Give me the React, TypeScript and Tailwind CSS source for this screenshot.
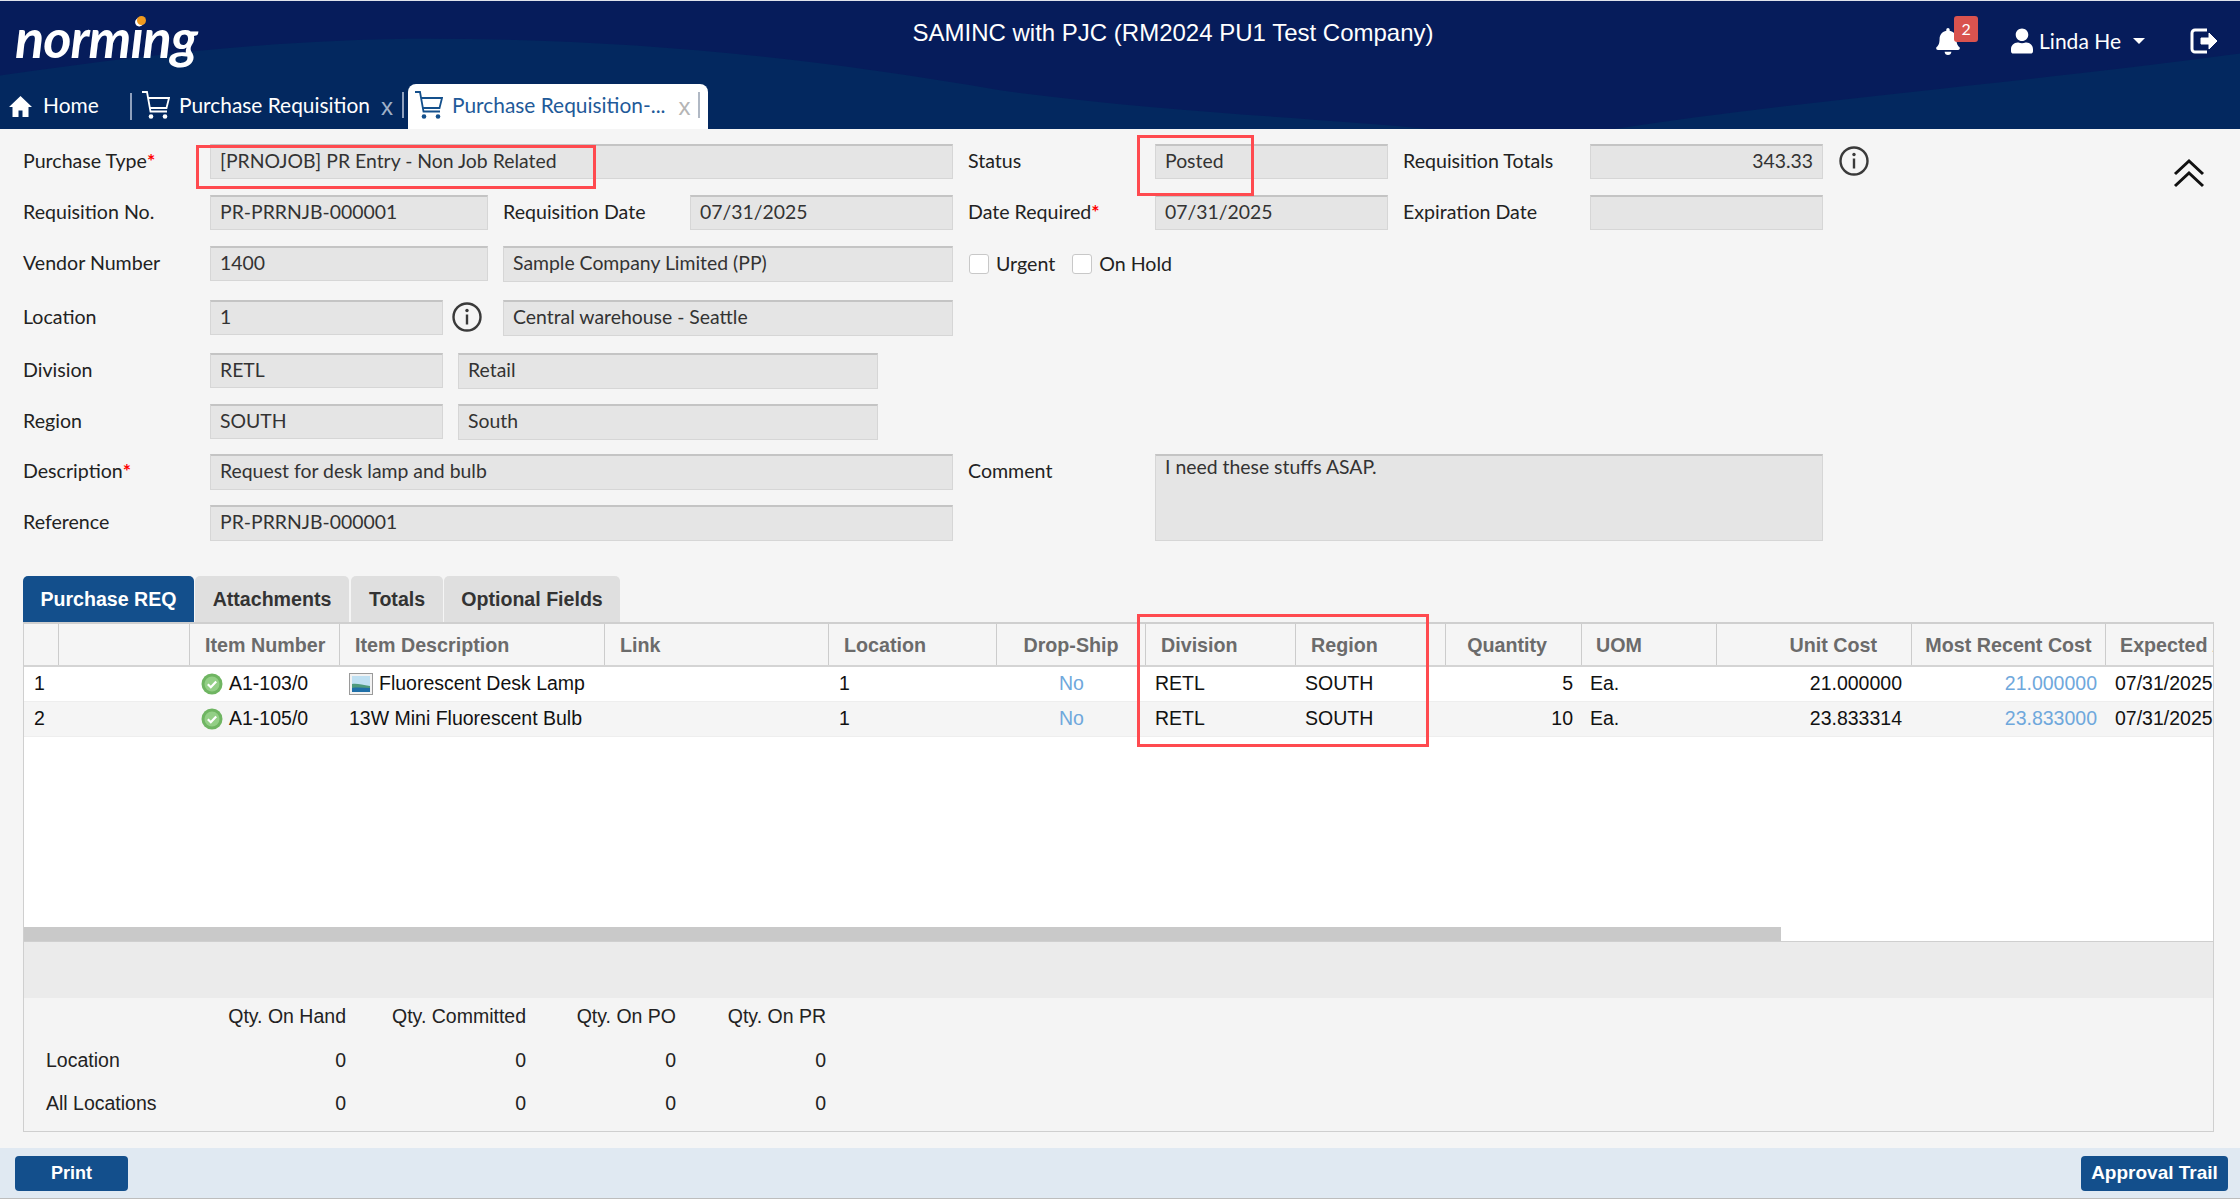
import { FaBell, FaUser } from "react-icons/fa";

const lato = "[font-family:Lato,sans-serif]";
const arial = "[font-family:Liberation_Sans,Arial,sans-serif]";

function CartIcon({ className }: { className: string }) {
  return (
    <svg viewBox="0 0 28 28" className={className} fill="none" stroke="currentColor" strokeWidth="1.8">
      <path d="M0 1h5l3.5 19.5H25" />
      <path d="M6 7h21l-2.5 10H8" />
      <circle cx="9" cy="25.5" r="2.3" fill="currentColor" stroke="none" />
      <circle cx="23" cy="25.5" r="2.3" fill="currentColor" stroke="none" />
    </svg>
  );
}

function InfoIcon({ className }: { className: string }) {
  return (
    <svg viewBox="0 0 30 30" className={className} fill="none">
      <circle cx="15" cy="15" r="13.5" stroke="#3a3a3a" strokeWidth="2.4" />
      <circle cx="15" cy="8.5" r="1.7" fill="#3a3a3a" />
      <path d="M15 12.5v10" stroke="#3a3a3a" strokeWidth="2.4" />
    </svg>
  );
}

function CheckIcon() {
  return (
    <svg viewBox="0 0 22 22" className="h-[22px] w-[22px] shrink-0">
      <circle cx="11" cy="11" r="10.5" fill="#6fb562" />
      <circle cx="11" cy="11" r="7.5" fill="#93cf86" />
      <path d="M6.8 11.2l3 3 5.4-5.8" fill="none" stroke="#fff" strokeWidth="2.2" />
    </svg>
  );
}

function PictureIcon() {
  return (
    <svg viewBox="0 0 24 24" className="h-6 w-6 shrink-0">
      <rect x="0.5" y="1.5" width="23" height="21" fill="#f2f2f2" stroke="#9a9a9a" />
      <rect x="3" y="4" width="18" height="16" fill="#bfe0f2" />
      <path d="M3 12c5-1 10 1 18 2v6H3z" fill="#4f9a7c" />
      <path d="M3 16c6-1 12 0 18 0v4H3z" fill="#1f6fa8" />
    </svg>
  );
}

function Field({
  w,
  children,
  right,
  h = "h-[35px]",
  leading = "leading-[29px]",
}: {
  w: string;
  children?: string;
  right?: boolean;
  h?: string;
  leading?: string;
}) {
  return (
    <div
      className={`${w} ${h} ${leading} shrink-0 border border-[#d6d6d6] border-t-2 border-t-[#c4c4c4] bg-[#e5e5e5] px-[9px] text-[19.4px] text-[#333] ${right ? "text-right" : ""}`}>
      {children}
    </div>
  );
}

function Label({ w, text, required }: { w: string; text: string; required?: boolean }) {
  return (
    <div className={`${w} shrink-0 text-[19.6px] leading-[33px] text-[#222]`}>
      {text}
      {required && <span className="font-bold text-[#f00]">*</span>}
    </div>
  );
}

function Check({ label }: { label: string }) {
  return (
    <div className="flex h-5 items-center gap-[7px]">
      <span className="h-5 w-5 rounded-[3px] border border-[#c8c8c8] bg-white" />
      <span className="text-[19.6px] leading-[18px] text-[#222]">{label}</span>
    </div>
  );
}

const gridCols =
  "grid grid-cols-[35px_131px_150px_265px_224px_168px_149px_150px_150px_136px_135px_195px_194px_200px]";

const headers = [
  { text: "", cls: "" },
  { text: "", cls: "" },
  { text: "Item Number", cls: "pl-[15px]" },
  { text: "Item Description", cls: "pl-[15px]" },
  { text: "Link", cls: "pl-[15px]" },
  { text: "Location", cls: "pl-[15px]" },
  { text: "Drop-Ship", cls: "text-center" },
  { text: "Division", cls: "pl-[15px]" },
  { text: "Region", cls: "pl-[15px]" },
  { text: "Quantity", cls: "text-right pr-[34px]" },
  { text: "UOM", cls: "pl-[14px]" },
  { text: "Unit Cost", cls: "text-right pr-[34px]" },
  { text: "Most Recent Cost", cls: "text-center" },
  { text: "Expected Arrival", cls: "pl-[14px]" },
];

const rows = [
  {
    no: "1",
    item: "A1-103/0",
    desc: "Fluorescent Desk Lamp",
    pic: true,
    qty: "5",
    cost: "21.000000",
    recent: "21.000000",
    bg: "bg-white",
  },
  {
    no: "2",
    item: "A1-105/0",
    desc: "13W Mini Fluorescent Bulb",
    pic: false,
    qty: "10",
    cost: "23.833314",
    recent: "23.833000",
    bg: "bg-[#f5f5f5]",
  },
];

export default function App() {
  return (
    <div className={`flex h-[1199px] w-[2240px] flex-col overflow-hidden bg-[#f5f5f5] ${lato}`}>
      {/* HEADER */}
      <header className="relative h-[129px] shrink-0 border-t border-[#dfe3ec] bg-[#061c5b]">
        <svg viewBox="0 0 2240 129" className="absolute inset-0 h-full w-full" preserveAspectRatio="none">
          <path d="M0 75C140 55 280 38 430 38C620 38 800 55 1000 90C1160 112 1320 118 1430 129H0z" fill="#03285f" />
          <path d="M1614 129C1800 100 2000 85 2240 53V129z" fill="#03285f" />
        </svg>

        <div className="relative flex h-[83px] items-start">
          <div className="relative ml-[15px] mt-[6px] w-[190px]">
            <span className="text-[54px] leading-[62px] font-bold tracking-[-1px] text-white italic">norming</span>
            <span className="absolute top-[9px] left-[122px] h-[9px] w-[9px] rounded-full bg-[#f09a1e]" />
          </div>
          <div className={`ml-[668px] mt-[17px] w-[600px] text-center text-[24px] leading-[30px] whitespace-nowrap text-white ${arial}`}>
            SAMINC with PJC (RM2024 PU1 Test Company)
          </div>
          <div className="relative ml-auto flex items-center pt-[25px] pr-[22px] text-white">
            <div className="relative mr-[51px]">
              <FaBell className="h-[27px] w-[24px]" />
              <span className="absolute -top-[12px] left-[18px] flex h-[26px] w-6 items-center justify-center rounded-[3px] bg-[#d9534f] text-[16px]">
                2
              </span>
            </div>
            <FaUser className="mr-[6px] h-[26px] w-[22px]" />
            <span className="text-[21px] leading-[30px]">Linda He</span>
            <span className="mr-[45px] ml-3 h-0 w-0 border-x-[6px] border-t-[6px] border-x-transparent border-t-white" />
            <svg viewBox="0 0 28 26" className="h-[26px] w-[28px]" fill="none" stroke="#fff" strokeWidth="3">
              <path d="M17 2H5a3 3 0 0 0-3 3v16a3 3 0 0 0 3 3h12" />
              <path d="M11 10h8V5l8 8-8 8v-5h-8z" fill="#fff" strokeWidth="1" />
            </svg>
          </div>
        </div>

        <nav className="relative flex h-[45px] items-stretch text-[20.9px]">
          <div className="flex w-[130px] items-center pb-[3px] pl-[9px] text-white">
            <svg viewBox="0 0 23 23" className="mt-[3px] mr-[11px] h-[23px] w-[23px]" fill="#fff">
              <path d="M11.5 1L0 12h3.5v10h6v-6.5h4V22h6V12H23z" />
            </svg>
            <span>Home</span>
          </div>
          <div className="my-[9px] w-[2px] bg-[#8fa0bd]" />
          <div className="flex w-[276px] items-center pb-[3px] pl-[10px] text-white">
            <CartIcon className="h-7 w-7" />
            <span className="ml-[9px] whitespace-nowrap">Purchase Requisition</span>
            <span className={`ml-[11px] pt-[3px] text-[24px] leading-[26px] text-[#9fb0c8] ${arial}`}>x</span>
            <span className="ml-[9px] h-[26px] w-[2px] bg-[#8fa0bd]" />
          </div>
          <div className="flex w-[300px] items-center rounded-t-[8px] bg-white pb-[3px] pl-[7px] text-[#1f5a99]">
            <CartIcon className="h-7 w-7 text-[#14508c]" />
            <span className="ml-[9px] whitespace-nowrap">Purchase Requisition-...</span>
            <span className={`ml-[13px] pt-[3px] text-[24px] leading-[26px] text-[#b5b5b5] ${arial}`}>x</span>
            <span className="ml-[7px] h-[26px] w-[2px] bg-[#b0b8c4]" />
          </div>
        </nav>
      </header>

      {/* FORM */}
      <section className="relative flex h-[447px] shrink-0 flex-col pt-[15px] pl-[23px]">
        <div className="flex">
          <Label w="w-[187px]" text="Purchase Type" required />
          <Field w="w-[743px]">[PRNOJOB] PR Entry - Non Job Related</Field>
          <div className="w-[15px]" />
          <Label w="w-[187px]" text="Status" />
          <Field w="w-[233px]">Posted</Field>
          <div className="w-[15px]" />
          <Label w="w-[187px]" text="Requisition Totals" />
          <Field w="w-[233px]" right>
            343.33
          </Field>
          <InfoIcon className="mt-[2px] ml-4 h-[30px] w-[30px]" />
          <svg
            viewBox="0 0 32 30"
            className="mt-[14px] -mb-[9px] ml-[304px] h-[30px] w-8"
            fill="none"
            stroke="#111"
            strokeWidth="3">
            <path d="M2 16L16 3l14 13" />
            <path d="M2 28L16 15l14 13" />
          </svg>
        </div>

        <div className="mt-4 flex">
          <Label w="w-[187px]" text="Requisition No." />
          <Field w="w-[278px]">PR-PRRNJB-000001</Field>
          <div className="w-[15px]" />
          <Label w="w-[187px]" text="Requisition Date" />
          <Field w="w-[263px]">07/31/2025</Field>
          <div className="w-[15px]" />
          <Label w="w-[187px]" text="Date Required" required />
          <Field w="w-[233px]">07/31/2025</Field>
          <div className="w-[15px]" />
          <Label w="w-[187px]" text="Expiration Date" />
          <Field w="w-[233px]" />
        </div>

        <div className="mt-4 flex">
          <Label w="w-[187px]" text="Vendor Number" />
          <Field w="w-[278px]">1400</Field>
          <div className="w-[15px]" />
          <Field w="w-[450px]" h="h-[36px]">
            Sample Company Limited (PP)
          </Field>
          <div className="ml-4 flex items-center gap-[17px] self-start pt-2">
            <Check label="Urgent" />
            <Check label="On Hold" />
          </div>
        </div>

        <div className="mt-[18px] flex">
          <Label w="w-[187px]" text="Location" />
          <Field w="w-[233px]">1</Field>
          <InfoIcon className="mt-[2px] ml-[9px] h-[30px] w-[30px]" />
          <div className="w-[21px]" />
          <Field w="w-[450px]" h="h-[36px]">
            Central warehouse - Seattle
          </Field>
        </div>

        <div className="mt-[17px] flex">
          <Label w="w-[187px]" text="Division" />
          <Field w="w-[233px]">RETL</Field>
          <div className="w-[15px]" />
          <Field w="w-[420px]" h="h-[36px]">
            Retail
          </Field>
        </div>

        <div className="mt-[15px] flex">
          <Label w="w-[187px]" text="Region" />
          <Field w="w-[233px]">SOUTH</Field>
          <div className="w-[15px]" />
          <Field w="w-[420px]" h="h-[36px]">
            South
          </Field>
        </div>

        <div className="mt-[14px] flex">
          <div className="flex w-[930px] flex-col gap-[15px]">
            <div className="flex">
              <Label w="w-[187px]" text="Description" required />
              <Field w="w-[743px]" h="h-[36px]">
                Request for desk lamp and bulb
              </Field>
            </div>
            <div className="flex">
              <Label w="w-[187px]" text="Reference" />
              <Field w="w-[743px]" h="h-[36px]">
                PR-PRRNJB-000001
              </Field>
            </div>
          </div>
          <div className="w-[15px]" />
          <Label w="w-[187px]" text="Comment" />
          <Field w="w-[668px]" h="h-[87px]" leading="leading-[22px]">
            I need these stuffs ASAP.
          </Field>
        </div>

        {/* annotation boxes */}
        <div className="absolute top-[16px] left-[196px] h-[44px] w-[400px] border-[3px] border-[#ff4a4f]" />
        <div className="absolute top-[6px] left-[1137px] h-[61px] w-[117px] border-[3px] border-[#ff4a4f]" />
      </section>

      {/* TABS */}
      <div className={`flex h-[46px] shrink-0 gap-[1px] pl-[23px] text-[19.6px] font-bold ${arial}`}>
        <div className="flex w-[171px] items-center justify-center rounded-t-[5px] bg-[#134f8c] pt-[2px] text-white">
          Purchase REQ
        </div>
        <div className="flex w-[154px] items-center justify-center rounded-t-[5px] bg-[#dfdfdf] pt-[2px] text-[#333]">
          Attachments
        </div>
        <div className="ml-[1px] flex w-[92px] items-center justify-center rounded-t-[5px] bg-[#dfdfdf] pt-[2px] text-[#333]">
          Totals
        </div>
        <div className="flex w-[176px] items-center justify-center rounded-t-[5px] bg-[#dfdfdf] pt-[2px] text-[#333]">
          Optional Fields
        </div>
      </div>

      {/* TABLE + STOCK PANEL */}
      <section className={`relative ml-[23px] flex h-[510px] w-[2191px] shrink-0 flex-col border-x border-b border-[#cfcfcf] ${arial}`}>
        <div className="flex h-[319px] flex-col overflow-hidden border-t-2 border-[#cfcfcf] bg-white">
          <div className={`${gridCols} h-[43px] shrink-0 border-b-2 border-[#d4d4d4] bg-[#f5f5f5]`}>
            {headers.map((h, i) => (
              <div
                key={i}
                className={`overflow-hidden border-r border-[#cccccc] text-[19.7px] leading-[43px] font-bold whitespace-nowrap text-[#6b6b6b] last:border-r-0 ${h.cls}`}>
                {h.text}
              </div>
            ))}
          </div>
          {rows.map((r) => (
            <div
              key={r.no}
              className={`${gridCols} h-[35px] shrink-0 items-center border-b border-[#eeeeee] text-[19.5px] text-[#111] ${r.bg}`}>
              <div className="pl-[10px]">{r.no}</div>
              <div />
              <div className="flex items-center gap-[6px] pl-[11px]">
                <CheckIcon />
                <span>{r.item}</span>
              </div>
              <div className="flex items-center gap-[6px] pl-[9px] whitespace-nowrap">
                {r.pic && <PictureIcon />}
                <span>{r.desc}</span>
              </div>
              <div />
              <div className="pl-[10px]">1</div>
              <div className="text-center text-[#6fa8dc]">No</div>
              <div className="pl-[9px]">RETL</div>
              <div className="pl-[9px]">SOUTH</div>
              <div className="pr-[9px] text-right">{r.qty}</div>
              <div className="pl-[8px]">Ea.</div>
              <div className="pr-[10px] text-right">{r.cost}</div>
              <div className="pr-[9px] text-right text-[#6fa8dc]">{r.recent}</div>
              <div className="pl-[9px] whitespace-nowrap">07/31/2025</div>
            </div>
          ))}
          <div className="flex flex-1 items-end">
            <div className="h-[14px] w-[1757px] bg-[#c9c9c9]" />
          </div>
        </div>
        <div className="h-[57px] shrink-0 border-t border-[#cfcfcf] bg-[#ebebeb]" />
        <div className="flex-1 bg-[#f4f4f4] pt-[1px] text-[19.5px] text-[#222]">
          <div className="grid grid-cols-[150px_172px_180px_150px_150px] grid-rows-[36px_52px_34px] items-center">
            <div />
            <div className="text-right">Qty. On Hand</div>
            <div className="text-right">Qty. Committed</div>
            <div className="text-right">Qty. On PO</div>
            <div className="text-right">Qty. On PR</div>
            <div className="pl-[22px]">Location</div>
            <div className="text-right">0</div>
            <div className="text-right">0</div>
            <div className="text-right">0</div>
            <div className="text-right">0</div>
            <div className="pl-[22px]">All Locations</div>
            <div className="text-right">0</div>
            <div className="text-right">0</div>
            <div className="text-right">0</div>
            <div className="text-right">0</div>
          </div>
        </div>
        {/* annotation box */}
        <div className="absolute top-[-8px] left-[1113px] h-[133px] w-[292px] border-[3px] border-[#ff4a4f]" />
      </section>

      <div className="h-[16px] shrink-0" />

      {/* FOOTER */}
      <footer className={`flex h-[52px] shrink-0 items-center justify-between border-b-2 border-[#bdbdbd] bg-[#e0e9f2] pr-3 pl-[15px] font-bold text-white ${arial}`}>
        <button className="h-[35px] w-[113px] rounded-[4px] bg-[#134f8c] text-[18px]">Print</button>
        <button className="h-[35px] w-[147px] rounded-[4px] bg-[#134f8c] text-[19px]">Approval Trail</button>
      </footer>
    </div>
  );
}
